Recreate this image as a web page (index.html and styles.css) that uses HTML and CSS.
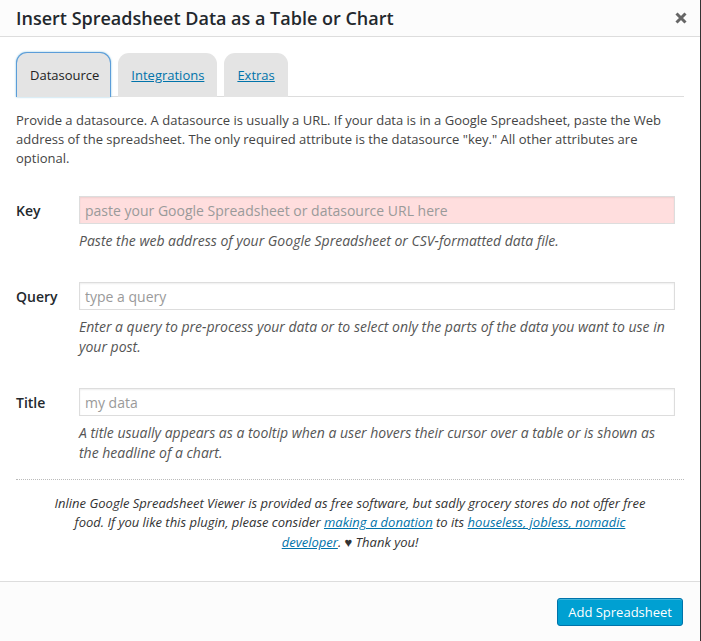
FILE: index.html
```html
<!DOCTYPE html>
<html>
<head>
<meta charset="utf-8">
<link rel="stylesheet" href="styles.css">
</head>
<body>
<div class="modal">
  <header class="modal-header">
    <h1 class="modal-title">Insert Spreadsheet Data as a Table or Chart</h1>
    <button class="close" aria-label="Close">
      <svg width="12" height="12" viewBox="0 0 12 12"><path d="M1.5 1.5 L10.5 10.5 M10.5 1.5 L1.5 10.5" stroke="#666" stroke-width="3" stroke-linecap="butt"/></svg>
    </button>
  </header>
  <main class="modal-body">
    <nav class="tabs">
      <span class="tab active">Datasource</span>
      <span class="tab"><a href="#">Integrations</a></span>
      <span class="tab"><a href="#">Extras</a></span>
    </nav>
    <p class="intro">Provide a datasource. A datasource is usually a URL. If your data is in a Google Spreadsheet, paste the Web address of the spreadsheet. The only required attribute is the datasource "key." All other attributes are optional.</p>
    <div class="fields">
      <div class="field">
        <label class="label">Key</label>
        <div class="control">
          <input class="input input-required" type="text" placeholder="paste your Google Spreadsheet or datasource URL here">
          <p class="desc">Paste the web address of your Google Spreadsheet or CSV-formatted data file.</p>
        </div>
      </div>
      <div class="field">
        <label class="label">Query</label>
        <div class="control">
          <input class="input" type="text" placeholder="type a query">
          <p class="desc">Enter a query to pre-process your data or to select only the parts of the data you want to use in your post.</p>
        </div>
      </div>
      <div class="field">
        <label class="label">Title</label>
        <div class="control">
          <input class="input" type="text" placeholder="my data">
          <p class="desc">A title usually appears as a tooltip when a user hovers their cursor over a table or is shown as the headline of a chart.</p>
        </div>
      </div>
    </div>
    <p class="donate">Inline Google Spreadsheet Viewer is provided as free software, but sadly grocery stores do not offer free food. If you like this plugin, please consider <a href="#">making a donation</a> to its <a href="#">houseless, jobless, nomadic developer</a>. ♥ Thank you!</p>
  </main>
  <footer class="modal-footer">
    <button class="primary">Add Spreadsheet</button>
  </footer>
</div>
</body>
</html>
```
FILE: styles.css
```css
html, body {
  margin: 0;
  padding: 0;
  background: #333;
  height: 100%;
}
body {
  font-family: "Open Sans", "Liberation Sans", sans-serif;
  font-size: 13px;
  color: #444;
}
.modal {
  width: 700px;
  height: 641px;
  background: #fff;
  display: flex;
  flex-direction: column;
}
.modal-header {
  height: 36px;
  background: #fcfcfc;
  border-bottom: 1px solid #ddd;
  display: flex;
  align-items: center;
  justify-content: space-between;
  padding: 0 13px 0 16px;
  flex: none;
}
.modal-title {
  margin: 0;
  font-size: 18px;
  font-weight: 600;
  color: #23282d;
  line-height: 36px;
}
.close {
  background: none;
  border: 0;
  padding: 0;
  width: 12px;
  height: 12px;
  display: flex;
  margin-top: -1px;
}
.modal-body {
  flex: 1;
  padding: 15px 16px 0 16px;
}
.tabs {
  display: flex;
  gap: 7px;
  border-bottom: 1px solid #ddd;
  height: 44px;
  align-items: flex-end;
}
.tab {
  height: 44px;
  box-sizing: border-box;
  background: #e4e4e4;
  border-radius: 11px 11px 0 0;
  padding: 0 13px;
  display: flex;
  align-items: center;
  line-height: 19px;
  color: #222;
  margin-bottom: -1px;
}
.tab.active {
  border: 1px solid #5b9dd9;
  border-bottom: 0;
  box-shadow: 0 0 2px rgba(30,140,190,.6);
  background: #e4e4e4;
  height: 45px;
  padding: 0 11px 0 13px;
}
.tab a, .donate a {
  color: #0073aa;
  text-decoration: underline;
}
.intro {
  margin: 14px 0 0 0;
  line-height: 19px;
}
.fields {
  margin-top: 28px;
  display: flex;
  flex-direction: column;
  gap: 31.5px;
}
.field {
  display: grid;
  grid-template-columns: 63px 596px;
  align-items: start;
}
.label {
  font-size: 14px;
  font-weight: 600;
  color: #23282d;
  line-height: 29px;
}
.input {
  display: block;
  width: 596px;
  height: 28px;
  box-sizing: border-box;
  border: 1px solid #ddd;
  box-shadow: inset 0 1px 2px rgba(0,0,0,.07);
  background: #fff;
  font-family: "Open Sans", "Liberation Sans", sans-serif;
  font-size: 14px;
  padding: 0 5px;
  margin: 0;
  color: #333;
}
.input::placeholder {
  color: #9a9a9a;
}
.input-required {
  background: #ffdede;
}
.desc {
  margin: 7px 0 0 0;
  font-style: italic;
  font-size: 14px;
  line-height: 19.75px;
  color: #555;
}
.donate {
  margin: 16px 0 0 0;
  border-top: 1px dotted #bbb;
  padding: 14px 30px 0 30px;
  text-align: center;
  font-style: italic;
  line-height: 19.5px;
  color: #333;
}
.modal-footer {
  height: 60px;
  flex: none;
  border-top: 1px solid #ddd;
  background: #fcfcfc;
  display: flex;
  align-items: flex-start;
  justify-content: flex-end;
  padding: 16px 17px 0 0;
  box-sizing: border-box;
}
.primary {
  height: 28px;
  background: #00a0d2;
  border: 1px solid #0073aa;
  border-radius: 3px;
  color: #fff;
  font-family: "Open Sans", "Liberation Sans", sans-serif;
  font-size: 13px;
  padding: 0 10px;
  box-shadow: inset 0 1px 0 rgba(120,200,230,.5);
}
```
